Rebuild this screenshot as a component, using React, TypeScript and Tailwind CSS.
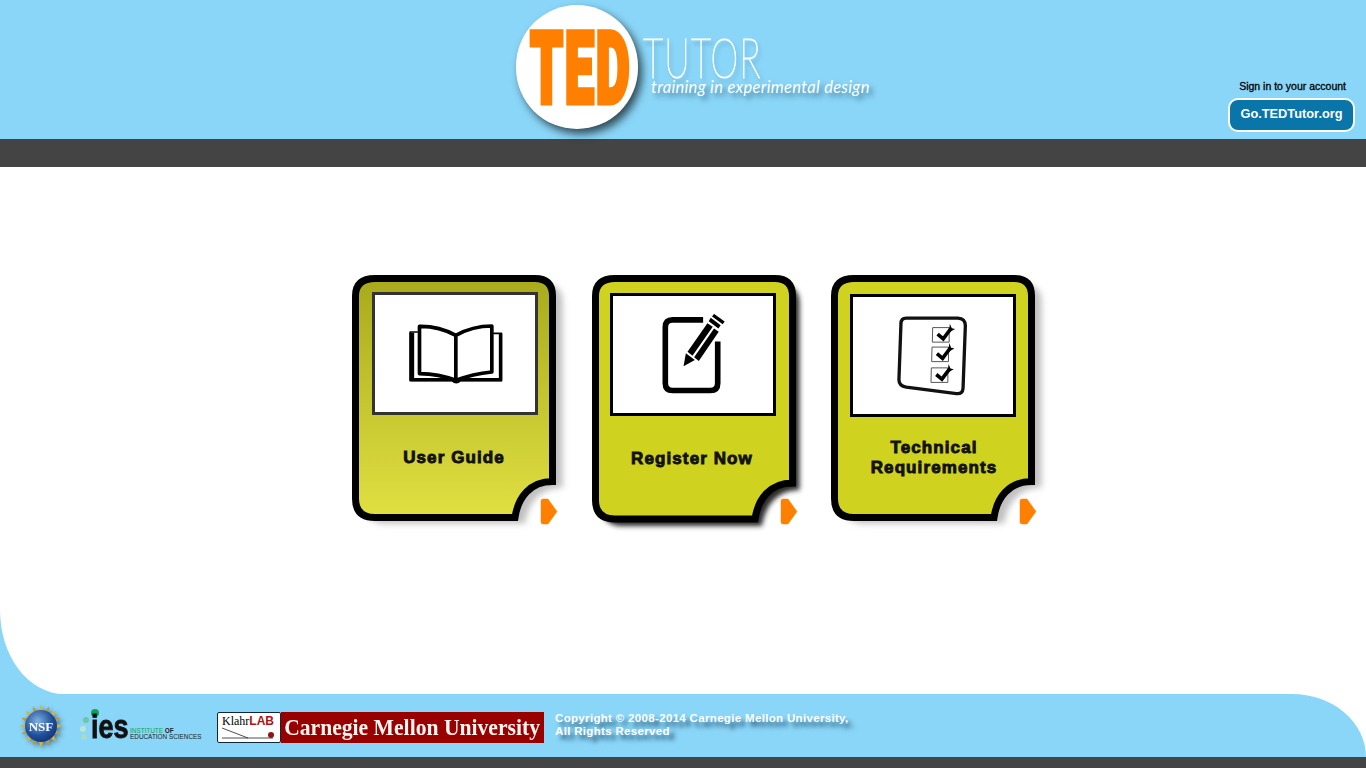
import React from "react";

const cardPath = (b: number) =>
  `M23 3.5H183Q200.5 3.5 200.5 21V${b - 36}C178 ${b - 36} 166 ${b - 20} 163 ${b}H23Q3.5 ${b} 3.5 ${b - 19}V21Q3.5 3.5 23 3.5Z`;

function BookIcon() {
  return (
    <svg width="97" height="64" viewBox="200 170 290 192" fill="none" stroke="#000">
      <path d="M232 200H209V346H335Q347 358 360 346H483V204H458" strokeWidth="5" fill="#fff" strokeLinejoin="round" />
      <path d="M214 202V345" strokeWidth="14" />
      <path d="M480 205V345" strokeWidth="10" />
      <path d="M212 343H484" strokeWidth="10" />
      <path d="M237 183Q295 182 346 210V345Q295 326 237 325Z" strokeWidth="11" fill="#fff" strokeLinejoin="round" />
      <path d="M454 182Q396 182 346 210V345Q396 326 454 320Z" strokeWidth="11" fill="#fff" strokeLinejoin="round" />
    </svg>
  );
}

function PencilIcon() {
  return (
    <svg width="63" height="80" viewBox="244 143 190 240" fill="none" className="mb-[2px]">
      <path d="M368 160H276Q254 160 254 182V351Q254 373 276 373H390Q412 373 412 351V225" stroke="#000" strokeWidth="17" />
      <path d="M309 300L316 261L343 281Z" fill="#000" />
      <path d="M321 256L381 170L397 181L336 268Z" fill="#000" />
      <path d="M341 273L401 186L415 196L355 284Z" fill="#000" />
      <path d="M385 164L391 154L421 176L414 186Z" fill="#000" />
      <path d="M395 150L401 142L433 165L427 173Z" fill="#000" />
    </svg>
  );
}

function CheckRow({ y, x }: { y: number; x: number }) {
  return (
    <g>
      <path d={`M${x} ${y}H${x + 50}V${y + 44}H${x - 1}Z`} fill="#fff" stroke="#555" strokeWidth="3" />
      <path d={`M${x + 15} ${y + 20}L${x + 32} ${y + 34}L${x + 56} ${y + 2}`} stroke="#000" strokeWidth="11" fill="none" />
      <path d={`M${x + 52} ${y - 12}L${x + 58} ${y + 2}L${x + 68} ${y + 4}L${x + 50} ${y + 14}Z`} fill="#000" />
    </g>
  );
}

function ChecklistIcon() {
  return (
    <svg width="70" height="82" viewBox="228 148 212 244" fill="none" className="mr-[3px]">
      <path d="M256 155H412Q435 156 435 178L428 368Q427 386 408 384L256 364Q232 360 234 338L240 172Q240 155 256 155Z" fill="#fff" stroke="#111" strokeWidth="10" />
      <CheckRow x={336} y={184} />
      <CheckRow x={334} y={243} />
      <CheckRow x={332} y={306} />
    </svg>
  );
}

function Card({
  tall,
  title,
  fill,
  shadow,
  boxClass,
  labelClass,
  children,
}: {
  tall?: boolean;
  title: React.ReactNode;
  fill: string;
  shadow: string;
  boxClass: string;
  labelClass: string;
  children: React.ReactNode;
}) {
  const b = tall ? 244 : 242.5;
  const id = title === "User Guide" ? "c1" : tall ? "c2" : "c3";
  return (
    <div className={`relative w-[204px] ${tall ? "h-[248px]" : "h-[246px]"} flex flex-col`}>
      <svg className="absolute left-0 top-0 overflow-visible" width="204" height="248" viewBox="0 0 204 248">
        <defs>
          <linearGradient id={`g-${id}`} x1="0" x2="0" y1="0" y2="1">
            <stop offset="0" stopColor="#a8aa1c" />
            <stop offset="1" stopColor="#e0e042" />
          </linearGradient>
          <filter id={`b-${id}`} x="-20%" y="-20%" width="140%" height="140%">
            <feGaussianBlur stdDeviation={tall ? 2.5 : 3} />
          </filter>
        </defs>
        <path d={cardPath(b)} transform={tall ? "translate(7 7)" : "translate(10 6)"} fill={shadow} filter={`url(#b-${id})`} />
        <path d={cardPath(b)} fill={fill === "grad" ? `url(#g-${id})` : fill} stroke="#000" strokeWidth="7" />
        <path d="M191 224H196L205 236.5L196 249H191Q189 249 189 247V226Q189 224 191 224Z" fill="#ff8000" stroke="#ff8000" strokeWidth="0.5" strokeLinejoin="round" />
      </svg>
      <div className={`relative flex h-[123px] w-[166px] shrink-0 items-center justify-center bg-white ${boxClass}`}>{children}</div>
      <div
        className={`relative flex h-[85px] flex-col items-center justify-center text-center font-['Liberation_Sans',sans-serif] text-[17px] font-bold leading-[20px] tracking-[1.1px] text-[#111] [-webkit-text-stroke:0.9px_#111] ${labelClass}`}
      >
        {title}
      </div>
    </div>
  );
}

function NsfLogo() {
  const rays = Array.from({ length: 16 }, (_, i) => i * 22.5);
  return (
    <svg width="44" height="44" viewBox="-22 -22 44 44" className="shrink-0 drop-shadow-[2px_2px_2px_rgba(0,0,0,0.4)]">
      <defs>
        <radialGradient id="nsf" cx="0.4" cy="0.35" r="0.75">
          <stop offset="0" stopColor="#7fb2de" />
          <stop offset="0.6" stopColor="#1f4f9c" />
          <stop offset="1" stopColor="#0e2f73" />
        </radialGradient>
      </defs>
      {rays.map((r) => (
        <path key={r} d="M-2.6 -14.5L0 -21.5L2.6 -14.5Z" fill={r % 45 === 0 ? "#d8b23c" : "#b59a4c"} transform={`rotate(${r})`} />
      ))}
      <circle r="16" fill="url(#nsf)" />
      <text x="0" y="4.5" textAnchor="middle" fontFamily="Liberation Serif, serif" fontWeight="700" fontSize="13" fill="#fff">
        NSF
      </text>
    </svg>
  );
}

function IesLogo() {
  return (
    <div className="relative ml-[17px] h-[34px] w-[122px] shrink-0">
      <span className="absolute left-[11px] top-0 h-[8px] w-[8px] rounded-full bg-[#0fa257]" />
      <span className="absolute left-[3px] top-[8px] h-[6px] w-[6px] rounded-full bg-[#6fc6a0]" />
      <span className="absolute left-0 top-[17px] h-[6px] w-[6px] rounded-full bg-[#bfe3d2]" />
      <span className="absolute left-[1px] top-[25px] h-[6px] w-[6px] rounded-full bg-[#a7dcc4]" />
      <span className="absolute bottom-[1px] left-[11px] origin-bottom-left scale-x-[0.82] font-['Liberation_Sans',sans-serif] text-[33px] font-bold leading-[30px] text-[#111] [-webkit-text-stroke:0.8px_#111]">
        ies
      </span>
      <div className="absolute left-[50px] top-[19px] whitespace-nowrap font-['Liberation_Sans',sans-serif] text-[6.4px] leading-[6.5px] text-[#222]">
        <div>
          <span className="text-[#0fa257]">INSTITUTE</span> <span className="font-bold">OF</span>
        </div>
        <div>EDUCATION SCIENCES</div>
      </div>
    </div>
  );
}

function KlahrLogo() {
  return (
    <div className="relative ml-[15px] h-[31px] w-[64px] shrink-0 rounded-[2px] border border-[#12263a] bg-white">
      <div className="whitespace-nowrap pl-[4px] pt-[2px] text-[12px] leading-[12px]">
        <span className="font-['Liberation_Serif',serif] text-black">Klahr</span>
        <span className="font-['Liberation_Sans',sans-serif] font-bold text-[#b11116]">LAB</span>
      </div>
      <svg className="absolute left-0 top-0" width="62" height="29" viewBox="0 0 62 29">
        <path d="M4 15L30 25M4 25H55" stroke="#222" strokeWidth="0.8" fill="none" />
        <circle cx="53" cy="22" r="3" fill="#8c1515" />
      </svg>
    </div>
  );
}

export default function App() {
  return (
    <div className="flex h-[768px] w-[1366px] flex-col overflow-hidden bg-white font-['Liberation_Sans',sans-serif]">
      <header className="flex h-[139px] shrink-0 bg-[#8ad6f8]">
        <div className="relative ml-[516px] mt-[5px] h-[124px] w-[122px] shrink-0 rounded-full bg-white shadow-[4px_5px_9px_rgba(0,0,0,0.65)]">
          <span className="absolute left-[14px] top-[24px] origin-top-left scale-x-[0.52] whitespace-nowrap font-['Roboto',sans-serif] text-[101px] font-black leading-[80px] tracking-[3px] text-[#ff8000] [-webkit-text-stroke:5px_#ff8000]">
            TED
          </span>
        </div>
        <div className="ml-[5px] mt-[36px] flex shrink-0 flex-col text-white [text-shadow:4px_4px_5px_rgba(0,50,80,0.55)]">
          <span className="h-[42px] origin-left scale-x-[0.63] font-['Lato',sans-serif] text-[56px] font-thin leading-[42px] tracking-[2px] [-webkit-text-stroke:1.2px_#fff]">
            TUTOR
          </span>
          <span className="ml-[8px] whitespace-nowrap font-['Lato',sans-serif] text-[16.5px] italic leading-[18px] tracking-[0.3px]">
            training in experimental design
          </span>
        </div>
        <div className="ml-auto mr-[11px] mt-[79px] flex flex-col items-end">
          <span className="mr-[9px] text-[10.5px] leading-[14px] text-black [-webkit-text-stroke:0.3px_#000]">Sign in to your account</span>
          <a className="mt-[5px] flex h-[34px] w-[127px] items-center justify-center rounded-[10px] border-2 border-white bg-[#0a75a8] pb-[2px] text-[12.8px] font-bold text-white">
            Go.TEDTutor.org
          </a>
        </div>
      </header>
      <div className="h-[28px] shrink-0 bg-[#444444]" />
      <div className="flex-1 bg-[linear-gradient(90deg,#8ad6f8_50%,#ffffff_50%)]">
        <main className="flex h-[527px] gap-[36px] rounded-bl-[64px_84px] bg-white pl-[352px] pt-[108px]">
          <Card
            title="User Guide"
            fill="grad"
            shadow="#c0c0c0"
            boxClass="ml-[20px] mt-[17px] border-[3px] border-[#333333]"
            labelClass="w-[204px]"
          >
            <BookIcon />
          </Card>
          <Card
            tall
            title="Register Now"
            fill="#d0d220"
            shadow="#2a2a2a"
            boxClass="ml-[18px] mt-[18px] border-[3px] border-black"
            labelClass="w-[200px]"
          >
            <PencilIcon />
          </Card>
          <div className="-ml-px">
            <Card
              title={
                <>
                  <span>Technical</span>
                  <span>Requirements</span>
                </>
              }
              fill="#d0d220"
              shadow="#c0c0c0"
              boxClass="ml-[19px] mt-[19px] border-[3px] border-black"
              labelClass="ml-px mt-[-2px] w-[204px]"
            >
              <ChecklistIcon />
            </Card>
          </div>
        </main>
        <footer className="flex h-[63px] items-center rounded-tr-[74px_63px] bg-[#8ad6f8] pl-[19px]">
          <NsfLogo />
          <IesLogo />
          <div className="mt-[4px] flex h-[31px] items-center">
            <KlahrLogo />
            <div className="flex h-[31px] w-[263px] shrink-0 items-center justify-center overflow-hidden bg-[#990000] font-['Liberation_Serif',serif] text-[23px] font-bold leading-none text-[#fdf5f0]">
              <span className="scale-x-[0.94] whitespace-nowrap">Carnegie Mellon University</span>
            </div>
          </div>
          <p className="mb-[1px] ml-[11px] text-[11.5px] font-bold leading-[13px] tracking-[0.33px] text-white [text-shadow:5px_5px_4px_rgba(0,40,70,0.7)]">
            Copyright © 2008-2014 Carnegie Mellon University,
            <br />
            All Rights Reserved
          </p>
        </footer>
      </div>
      <div className="h-[11px] shrink-0 bg-[#444444]" />
    </div>
  );
}
